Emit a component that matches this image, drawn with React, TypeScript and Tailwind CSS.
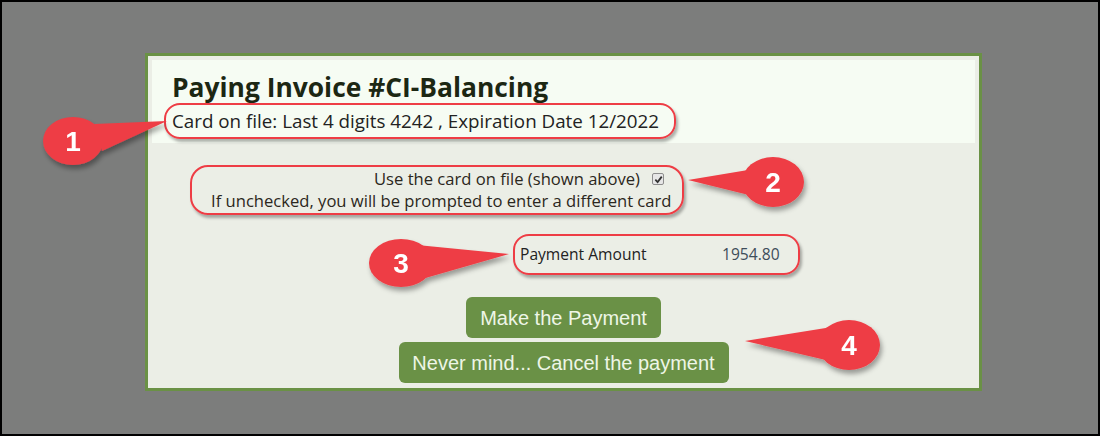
import React from "react";

const sans = { fontFamily: '"Open Sans", "Noto Sans", sans-serif' };
const arial = { fontFamily: '"Liberation Sans", Arial, sans-serif' };

// red numbered balloons with a pointing tail
const callouts = [
  { n: "1", cx: 71, cy: 139, rx: 30, ry: 24, tail: "92,122 165,119 100,149" },
  { n: "2", cx: 771, cy: 180, rx: 31, ry: 25, tail: "758,166 686,178 755,195" },
  { n: "3", cx: 399, cy: 261, rx: 32, ry: 24, tail: "415,243 507,252 420,277" },
  { n: "4", cx: 847, cy: 343, rx: 31, ry: 25, tail: "830,325 743,339 828,359" },
];

function Callouts() {
  return (
    <svg className="absolute inset-0 pointer-events-none" width="1100" height="436">
      <defs>
        <filter id="balloonShadow" x="-20%" y="-20%" width="140%" height="160%">
          <feDropShadow dx="2" dy="4" stdDeviation="2.5" floodColor="#000" floodOpacity="0.35" />
        </filter>
      </defs>
      {callouts.map((c) => (
        <g key={c.n} filter="url(#balloonShadow)">
          <polygon points={c.tail} fill="#ee3d45" />
          <ellipse cx={c.cx} cy={c.cy} rx={c.rx} ry={c.ry} fill="#ee3d45" />
          <text
            x={c.cx}
            y={c.cy + 10}
            textAnchor="middle"
            fill="#ffffff"
            fontSize="28"
            fontWeight="700"
            fontFamily='"Liberation Sans", Arial, sans-serif'
          >
            {c.n}
          </text>
        </g>
      ))}
    </svg>
  );
}

function CheckMark() {
  return (
    <span className="inline-flex w-[12px] h-[12px] items-center justify-center border border-[#8d8d8d] bg-[#e6e6e6] rounded-[2px]">
      <svg width="9" height="9" viewBox="0 0 10 10">
        <path d="M1.5 5.2 L4 7.8 L8.6 1.8" stroke="#333" strokeWidth="2" fill="none" />
      </svg>
    </span>
  );
}

export default function App() {
  return (
    <div className="relative w-[1100px] h-[436px] border-2 border-black bg-[#7c7d7c] pl-[143px] pt-[51px]">
      <div className="w-[837px] h-[338px] border-[3px] border-[#6a9145] bg-[#ebeee6] p-[4px]">
        {/* Header */}
        <div className="h-[83px] bg-[#f6fcf3] pl-[20px] pt-[12px]" style={sans}>
          <h1 className="text-[26.4px] leading-[30px] font-bold text-[#1c2713]">
            Paying Invoice #CI-Balancing
          </h1>
          <div className="mt-[1px] ml-[-8px] inline-flex items-center h-[36px] w-[512px] px-[6px] border-2 border-[#ee3d45] rounded-[16px] shadow-[2px_3px_3px_rgba(0,0,0,0.3)] text-[18.8px] text-[#222] whitespace-nowrap">
            Card on file: Last 4 digits 4242 , Expiration Date 12/2022
          </div>
        </div>

        {/* Card choice */}
        <div
          className="mt-[22px] ml-[38px] w-[494px] h-[50px] border-2 border-[#ee3d45] rounded-[18px] shadow-[2px_3px_3px_rgba(0,0,0,0.3)] flex flex-col justify-center text-[16.6px] leading-[22px] text-[#2b2720] whitespace-nowrap"
          style={sans}
        >
          <div className="flex justify-end items-center gap-[12px] pr-[18px]">
            <span>Use the card on file (shown above)</span>
            <CheckMark />
          </div>
          <div className="pl-[19px]">If unchecked, you will be prompted to enter a different card</div>
        </div>

        {/* Amount */}
        <div
          className="mt-[19px] ml-[361px] w-[287px] h-[41px] border-2 border-[#ee3d45] rounded-[16px] shadow-[2px_3px_3px_rgba(0,0,0,0.3)] flex items-center pl-[5px] text-[15.6px]"
          style={sans}
        >
          <span className="w-[202px] text-[#222]">Payment Amount</span>
          <span className="text-[#3e4d5a]">1954.80</span>
        </div>

        {/* Actions */}
        <div className="mt-[22px] flex flex-col items-center gap-[4px]" style={arial}>
          <button className="h-[41px] w-[195px] rounded-[6px] bg-[#6a9146] text-[20px] text-[#eef6e6]">
            Make the Payment
          </button>
          <button className="h-[41px] w-[330px] rounded-[6px] bg-[#6a9146] text-[20px] text-[#eef6e6]">
            Never mind... Cancel the payment
          </button>
        </div>
      </div>
      <Callouts />
    </div>
  );
}
